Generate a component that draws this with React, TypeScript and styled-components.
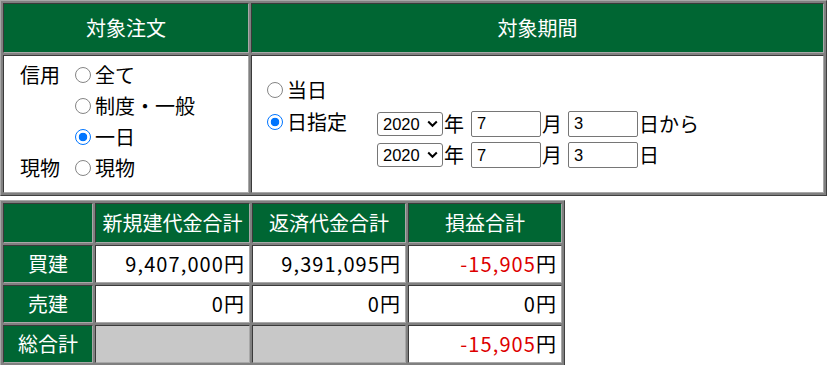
import React from "react";
import styled, { createGlobalStyle } from "styled-components";

const Global = createGlobalStyle`
  *, *::before, *::after { box-sizing: border-box; }
  html, body { margin: 0; padding: 0; background: #ffffff; }
  body {
    font-family: "Noto Sans CJK JP", "Noto Sans", sans-serif;
    font-size: 20px;
    color: #000000;
  }
`;

const Page = styled.div`
  display: flex;
  flex-direction: column;
  align-items: flex-start;
  gap: 4px;
`;

const Grid = styled.table<{ $w: number }>`
  border-collapse: separate;
  border-spacing: 2px;
  background: #808080;
  border: 1px solid;
  border-color: #a8a8a8 #404040 #404040 #a8a8a8;
  table-layout: fixed;
  width: ${(p) => p.$w}px;
`;

const Row = styled.tr<{ $h: number }>`
  height: ${(p) => p.$h}px;
`;

const Cell = styled.td<{
  $tone?: "head" | "white" | "gray";
  $align?: "left" | "center" | "right";
  $w?: number;
}>`
  border: 1px solid;
  border-color: #3a3a3a #a8a8a8 #a8a8a8 #3a3a3a;
  padding: 0 5px;
  font-size: 20px;
  line-height: 28px;
  white-space: nowrap;
  vertical-align: middle;
  text-align: ${(p) => p.$align ?? "left"};
  ${(p) => (p.$w ? `width: ${p.$w}px;` : "")}
  background: ${(p) =>
    p.$tone === "head" ? "#006633" : p.$tone === "gray" ? "#c8c8c8" : "#ffffff"};
  color: ${(p) => (p.$tone === "head" ? "#ffffff" : "#000000")};
`;

const Money = styled.span<{ $neg?: boolean }>`
  color: ${(p) => (p.$neg ? "#dd0000" : "#000000")};
  letter-spacing: 1.1px;
`;

const Yen = styled.span`
  color: #000000;
`;

/* Left cell: order kind */
const KindGrid = styled.div`
  display: grid;
  grid-template-columns: 55px auto;
  grid-auto-rows: 31px;
  align-items: center;
  padding: 0 0 5px 11px;
`;

const KindLabel = styled.span`
  font-size: 20px;
`;

const Option = styled.label`
  display: flex;
  align-items: center;
  gap: 4px;
  font-size: 20px;
`;

const Radio = styled.input.attrs({ type: "radio" })`
  appearance: none;
  -webkit-appearance: none;
  margin: 0;
  width: 16px;
  min-width: 16px;
  height: 16px;
  border-radius: 50%;
  border: 1px solid #858585;
  background: #ffffff;
  flex: none;
  &:checked {
    border: 1.5px solid #0075ff;
    background: radial-gradient(circle, #0075ff 0 4px, #ffffff 4.6px);
  }
`;

/* Right cell: period */
const PeriodGrid = styled.div`
  display: grid;
  grid-template-columns: 110px auto;
  grid-template-rows: 32px 32px 31px;
  align-items: center;
  padding: 0 0 2px 10px;
`;

const RadioCol = styled.div`
  align-self: center;
  margin-top: -4px;
`;

const DateLine = styled.div`
  display: flex;
  align-items: center;
  font-size: 20px;
`;

const Unit = styled.span<{ $gap?: number }>`
  margin-left: 1px;
  margin-right: ${(p) => p.$gap ?? 0}px;
`;

const SelectWrap = styled.span`
  position: relative;
  display: inline-flex;
`;

const Select = styled.select`
  appearance: none;
  width: 66px;
  height: 24px;
  border: 1px solid #767676;
  border-radius: 3px;
  background: #ffffff;
  font-family: "Liberation Sans", Arial, sans-serif;
  font-size: 16.5px;
  color: #000000;
  padding: 0 0 0 5px;
  margin: 0;
`;

const Chevron = styled.svg`
  position: absolute;
  right: 5px;
  top: 8px;
  pointer-events: none;
`;

const NumInput = styled.input`
  width: 70px;
  height: 26px;
  border: 1px solid #767676;
  border-radius: 2px;
  font-family: "Liberation Sans", Arial, sans-serif;
  font-size: 16.5px;
  color: #000000;
  padding: 0 5px;
  margin: 0;
  background: #ffffff;
`;

const YearSelect = () => (
  <SelectWrap>
    <Select defaultValue="2020">
      <option value="2020">2020</option>
    </Select>
    <Chevron width="11" height="8" viewBox="0 0 11 8">
      <path d="M1.2 1.5 L5.5 5.8 L9.8 1.5" fill="none" stroke="#000" strokeWidth="2" />
    </Chevron>
  </SelectWrap>
);

const DateRow = ({ tail }: { tail: string }) => (
  <DateLine>
    <YearSelect />
    <Unit $gap={7}>年</Unit>
    <NumInput defaultValue="7" />
    <Unit $gap={6}>月</Unit>
    <NumInput defaultValue="3" />
    <Unit>{tail}</Unit>
  </DateLine>
);

const rows = [
  { label: "買建", a: "9,407,000", b: "9,391,095", c: "-15,905", neg: true, gray: false },
  { label: "売建", a: "0", b: "0", c: "0", neg: false, gray: false },
  { label: "総合計", a: "", b: "", c: "-15,905", neg: true, gray: true },
];

export default function App() {
  return (
    <>
      <Global />
      <Page>
        <Grid $w={827}>
          <tbody>
            <Row $h={50}>
              <Cell $tone="head" $align="center" $w={246}>対象注文</Cell>
              <Cell $tone="head" $align="center">対象期間</Cell>
            </Row>
            <Row $h={138}>
              <Cell>
                <KindGrid>
                  <KindLabel>信用</KindLabel>
                  <Option>
                    <Radio name="kind" />全て
                  </Option>
                  <span />
                  <Option>
                    <Radio name="kind" />制度・一般
                  </Option>
                  <span />
                  <Option>
                    <Radio name="kind" defaultChecked />一日
                  </Option>
                  <KindLabel>現物</KindLabel>
                  <Option>
                    <Radio name="kind" />現物
                  </Option>
                </KindGrid>
              </Cell>
              <Cell>
                <PeriodGrid>
                  <RadioCol>
                    <Option>
                      <Radio name="period" />当日
                    </Option>
                  </RadioCol>
                  <span />
                  <RadioCol>
                    <Option>
                      <Radio name="period" defaultChecked />日指定
                    </Option>
                  </RadioCol>
                  <DateRow tail="日から" />
                  <span />
                  <DateRow tail="日" />
                </PeriodGrid>
              </Cell>
            </Row>
          </tbody>
        </Grid>

        <Grid $w={565}>
          <tbody>
            <Row $h={40}>
              <Cell $tone="head" $w={90} />
              <Cell $tone="head" $align="center" $w={155}>新規建代金合計</Cell>
              <Cell $tone="head" $align="center" $w={154}>返済代金合計</Cell>
              <Cell $tone="head" $align="center" $w={154}>損益合計</Cell>
            </Row>
            {rows.map((r) => (
              <Row $h={38} key={r.label}>
                <Cell $tone="head" $align="center">{r.label}</Cell>
                {r.gray ? (
                  <>
                    <Cell $tone="gray" />
                    <Cell $tone="gray" />
                  </>
                ) : (
                  <>
                    <Cell $align="right">
                      <Money>{r.a}</Money>
                      <Yen>円</Yen>
                    </Cell>
                    <Cell $align="right">
                      <Money>{r.b}</Money>
                      <Yen>円</Yen>
                    </Cell>
                  </>
                )}
                <Cell $align="right">
                  <Money $neg={r.neg}>{r.c}</Money>
                  <Yen>円</Yen>
                </Cell>
              </Row>
            ))}
          </tbody>
        </Grid>
      </Page>
    </>
  );
}
